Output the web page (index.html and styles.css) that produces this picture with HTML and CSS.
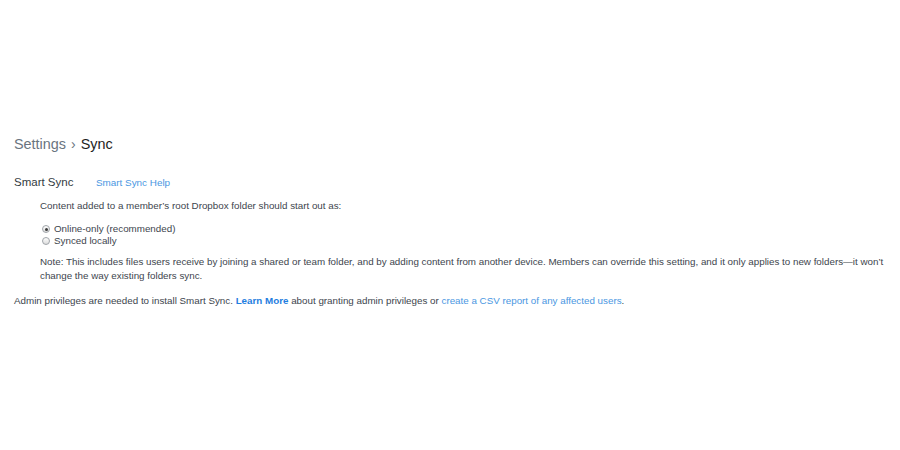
FILE: index.html
```html
<!DOCTYPE html>
<html>
<head>
<meta charset="utf-8">
<link rel="stylesheet" href="styles.css">
</head>
<body>
<div class="page">
  <h1 class="crumbs"><span class="crumb-parent">Settings</span><span class="crumb-sep">›</span><span class="crumb-current">Sync</span></h1>
  <div class="setting-head">
    <span class="setting-label">Smart Sync</span>
    <a class="link help" href="#">Smart Sync Help</a>
  </div>
  <div class="setting-body">
    <p class="intro">Content added to a member’s root Dropbox folder should start out as:</p>
    <div class="radios">
      <label class="radio"><span class="dot checked"></span>Online-only (recommended)</label>
      <label class="radio"><span class="dot"></span>Synced locally</label>
    </div>
    <p class="note">Note: This includes files users receive by joining a shared or team folder, and by adding content from another device. Members can override this setting, and it only applies to new folders—it won’t change the way existing folders sync.</p>
  </div>
  <p class="admin">Admin privileges are needed to install Smart Sync. <a class="link strong" href="#">Learn More</a> about granting admin privileges or <a class="link" href="#">create a CSV report of any affected users</a>.</p>
</div>
</body>
</html>
```
FILE: styles.css
```css
html, body { margin: 0; padding: 0; background: #fff; }
body { font-family: "Liberation Sans", Arial, sans-serif; color: #3d454d; }
.page { padding: 134px 14px 0 14px; }
.crumbs { margin: 0; font-weight: normal; font-size: 14.4px; line-height: 20px; display: flex; align-items: center; }
.crumb-parent { color: #6a7480; }
.crumb-sep { color: #6a7480; margin: 0 5px 0 5px; font-size: 14px; }
.crumb-current { color: #1e1e1e; }
.setting-head { margin-top: 22px; display: flex; align-items: baseline; height: 20px; }
.setting-label { font-size: 11.5px; color: #333b42; width: 82px; }
.link { color: #4a97e2; text-decoration: none; }
.help { font-size: 9.9px; }
.strong { font-weight: bold; color: #1f7ee0; }
.setting-body { padding-left: 26px; font-size: 9.8px; }
.intro { margin: 3px 0 0 0; line-height: 14px; }
.radios { margin-top: 10px; display: flex; flex-direction: column; }
.radio { display: flex; align-items: center; height: 12px; line-height: 12px; }
.dot { width: 8px; height: 8px; border: 1px solid #a0a5aa; border-radius: 50%; margin: 0 4px 0 2px; box-sizing: border-box; background: linear-gradient(#fdfdfd, #dcdcdc); position: relative; }
.dot.checked::after { content: ""; position: absolute; left: 1.5px; top: 1.5px; width: 3px; height: 3px; border-radius: 50%; background: #3a3a3a; }
.note { margin: 8px 0 0 0; line-height: 14px; width: 850px; }
.admin { margin: 11px 0 0 0; font-size: 9.8px; line-height: 14px; }
```
